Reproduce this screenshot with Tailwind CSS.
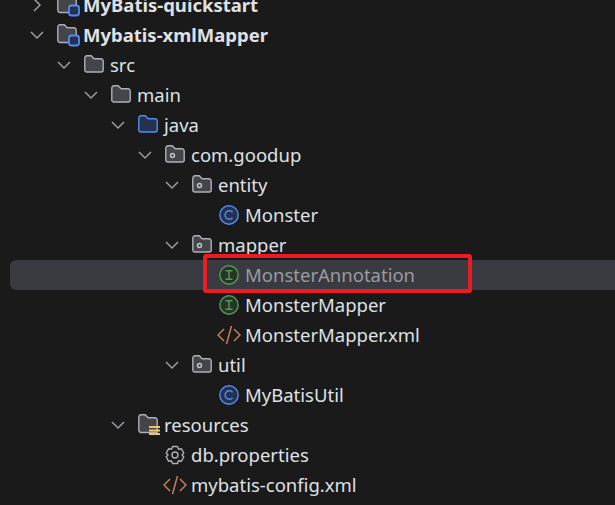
<!DOCTYPE html>
<html lang="en">
<head>
    <meta charset="UTF-8">
    <title>Project tree</title>
    <script src="https://cdn.jsdelivr.net/npm/@tailwindcss/browser@4"></script>
</head>
<body class="bg-[#1a1a1b] overflow-hidden">
    <svg class="hidden">
        <symbol id="open" viewBox="0 0 14 14"><path d="M1 4l6 6 6-6" fill="none" stroke="#9a9da3" stroke-width="1.5"/></symbol>
        <symbol id="closed" viewBox="0 0 14 14"><path d="M4 1l6 6-6 6" fill="none" stroke="#9a9da3" stroke-width="1.5"/></symbol>
        <symbol id="folder" viewBox="0 0 20 20"><path d="M.8 3a2.200 2.200 0 0 1 2.200-2.200h4.200l3 3H17a2.200 2.200 0 0 1 2.200 2.200v9a2 2 0 0 1-2 2H2.800a2 2 0 0 1-2-2z" fill="#43454a" stroke="#aeb0b6" stroke-width="1.400"/></symbol>
        <symbol id="java" viewBox="0 0 20 20"><path d="M.8 3a2.200 2.200 0 0 1 2.200-2.200h4.200l3 3H17a2.200 2.200 0 0 1 2.200 2.200v9a2 2 0 0 1-2 2H2.800a2 2 0 0 1-2-2z" fill="#25324d" stroke="#548af7" stroke-width="1.400"/></symbol>
        <symbol id="package" viewBox="0 0 20 20"><path d="M.8 3a2.200 2.200 0 0 1 2.200-2.200h4.200l3 3H17a2.200 2.200 0 0 1 2.200 2.200v9a2 2 0 0 1-2 2H2.800a2 2 0 0 1-2-2z" fill="#43454a" stroke="#aeb0b6" stroke-width="1.400"/><circle cx="7.500" cy="10.500" r="2" fill="none" stroke="#c4c6cb" stroke-width="1.400"/></symbol>
        <symbol id="module" viewBox="0 0 24 24"><path d="M.8 4a2.200 2.200 0 0 1 2.200-2.200h4.200l3 3H17a2.200 2.200 0 0 1 2.200 2.200v12.500H3a2.200 2.200 0 0 1-2.200-2.200z" fill="#43454a" stroke="#aeb0b6" stroke-width="1.400"/><rect x="12" y="12.500" width="10" height="10" rx="2.500" fill="#25324d" stroke="#548af7" stroke-width="1.800"/></symbol>
        <symbol id="resources" viewBox="0 0 24 24"><path d="M.8 4a2.200 2.200 0 0 1 2.200-2.200h4.200l3 3H17a2.200 2.200 0 0 1 2.200 2.200v12.500H3a2.200 2.200 0 0 1-2.200-2.200z" fill="#43454a" stroke="#aeb0b6" stroke-width="1.400"/><path d="M11 14h11M11 17.500h11M11 21h11" stroke="#f2c55c" stroke-width="2"/></symbol>
        <symbol id="class" viewBox="0 0 20 20"><circle cx="10" cy="10" r="9.200" fill="#25324d" stroke="#548af7" stroke-width="1.400"/><path d="M13.600 7.200a4.300 4.300 0 1 0 0 5.600" fill="none" stroke="#548af7" stroke-width="1.400"/></symbol>
        <symbol id="interface" viewBox="0 0 20 20"><circle cx="10" cy="10" r="9.200" fill="#253627" stroke="#57965c" stroke-width="1.400"/><path d="M6.500 5.800h7M6.500 14.200h7M10 5.800v8.400" fill="none" stroke="#57965c" stroke-width="1.400"/></symbol>
        <symbol id="xml" viewBox="0 0 24 20"><path d="M7 4l-6 6 6 6M17 4l6 6-6 6M14.500 1l-5 18" fill="none" stroke="#c77d55" stroke-width="1.500"/></symbol>
        <symbol id="gear" viewBox="0 0 20 20"><path d="M7.500 1.500h5l1 2.700 2.800-.5 2.500 4.300-1.800 2 1.800 2-2.500 4.300-2.800-.5-1 2.700h-5l-1-2.700-2.800.5-2.500-4.300 1.800-2-1.800-2 2.500-4.300 2.800.5z" fill="none" stroke="#aeb0b6" stroke-width="1.400" stroke-linejoin="round"/><circle cx="10" cy="10" r="3" fill="none" stroke="#aeb0b6" stroke-width="1.400"/></symbol>
    </svg>

    <div class="relative h-[505px] overflow-hidden font-['Noto_Sans','Open_Sans',sans-serif] text-[18.5px] text-[#dfe1e5]">
        <ul class="-mt-[10px]">
            <li class="flex items-center h-[30px] pl-[27px] font-bold">
                <svg class="w-[14px] h-[14px] mx-[3px]"><use href="#closed"/></svg>
                <svg class="w-[24px] h-[24px] ml-[10px] mr-[2px]"><use href="#module"/></svg>MyBatis-quickstart
            </li>
            <li class="flex items-center h-[30px] pl-[27px] font-bold">
                <svg class="w-[14px] h-[14px] mx-[3px]"><use href="#open"/></svg>
                <svg class="w-[24px] h-[24px] ml-[10px] mr-[2px]"><use href="#module"/></svg>Mybatis-xmlMapper
            </li>
            <li class="flex items-center h-[30px] pl-[54px]">
                <svg class="w-[14px] h-[14px] mx-[3px]"><use href="#open"/></svg>
                <svg class="w-[20px] h-[20px] ml-[10px] mr-[6px]"><use href="#folder"/></svg>src
            </li>
            <li class="flex items-center h-[30px] pl-[81px]">
                <svg class="w-[14px] h-[14px] mx-[3px]"><use href="#open"/></svg>
                <svg class="w-[20px] h-[20px] ml-[10px] mr-[6px]"><use href="#folder"/></svg>main
            </li>
            <li class="flex items-center h-[30px] pl-[108px]">
                <svg class="w-[14px] h-[14px] mx-[3px]"><use href="#open"/></svg>
                <svg class="w-[20px] h-[20px] ml-[10px] mr-[6px]"><use href="#java"/></svg>java
            </li>
            <li class="flex items-center h-[30px] pl-[135px]">
                <svg class="w-[14px] h-[14px] mx-[3px]"><use href="#open"/></svg>
                <svg class="w-[20px] h-[20px] ml-[10px] mr-[6px]"><use href="#package"/></svg>com.goodup
            </li>
            <li class="flex items-center h-[30px] pl-[162px]">
                <svg class="w-[14px] h-[14px] mx-[3px]"><use href="#open"/></svg>
                <svg class="w-[20px] h-[20px] ml-[10px] mr-[6px]"><use href="#package"/></svg>entity
            </li>
            <li class="flex items-center h-[30px] pl-[219px]">
                <svg class="w-[20px] h-[20px] mr-[6px]"><use href="#class"/></svg>Monster
            </li>
            <li class="flex items-center h-[30px] pl-[162px]">
                <svg class="w-[14px] h-[14px] mx-[3px]"><use href="#open"/></svg>
                <svg class="w-[20px] h-[20px] ml-[10px] mr-[6px]"><use href="#package"/></svg>mapper
            </li>
            <li class="flex items-center h-[30px] ml-[10px] pl-[209px] rounded-l-[6px] bg-[#3a3b40] text-[#9a9ca1]">
                <svg class="w-[20px] h-[20px] mr-[6px]"><use href="#interface"/></svg>MonsterAnnotation
            </li>
            <li class="flex items-center h-[30px] pl-[219px]">
                <svg class="w-[20px] h-[20px] mr-[6px]"><use href="#interface"/></svg>MonsterMapper
            </li>
            <li class="flex items-center h-[30px] pl-[217px]">
                <svg class="w-[24px] h-[20px] mr-[4px]"><use href="#xml"/></svg>MonsterMapper.xml
            </li>
            <li class="flex items-center h-[30px] pl-[162px]">
                <svg class="w-[14px] h-[14px] mx-[3px]"><use href="#open"/></svg>
                <svg class="w-[20px] h-[20px] ml-[10px] mr-[6px]"><use href="#package"/></svg>util
            </li>
            <li class="flex items-center h-[30px] pl-[219px]">
                <svg class="w-[20px] h-[20px] mr-[6px]"><use href="#class"/></svg>MyBatisUtil
            </li>
            <li class="flex items-center h-[30px] pl-[108px]">
                <svg class="w-[14px] h-[14px] mx-[3px]"><use href="#open"/></svg>
                <svg class="w-[24px] h-[24px] ml-[10px] mr-[2px]"><use href="#resources"/></svg>resources
            </li>
            <li class="flex items-center h-[30px] pl-[165px]">
                <svg class="w-[20px] h-[20px] mr-[6px]"><use href="#gear"/></svg>db.properties
            </li>
            <li class="flex items-center h-[30px] pl-[163px]">
                <svg class="w-[24px] h-[20px] mr-[4px]"><use href="#xml"/></svg>mybatis-config.xml
            </li>
        </ul>
        <!-- red annotation drawn over the selected row -->
        <div class="absolute left-[203px] top-[254px] w-[269px] h-[39px] border-4 border-[#ed1c24] rounded-[3px]"></div>
    </div>
</body>
</html>
